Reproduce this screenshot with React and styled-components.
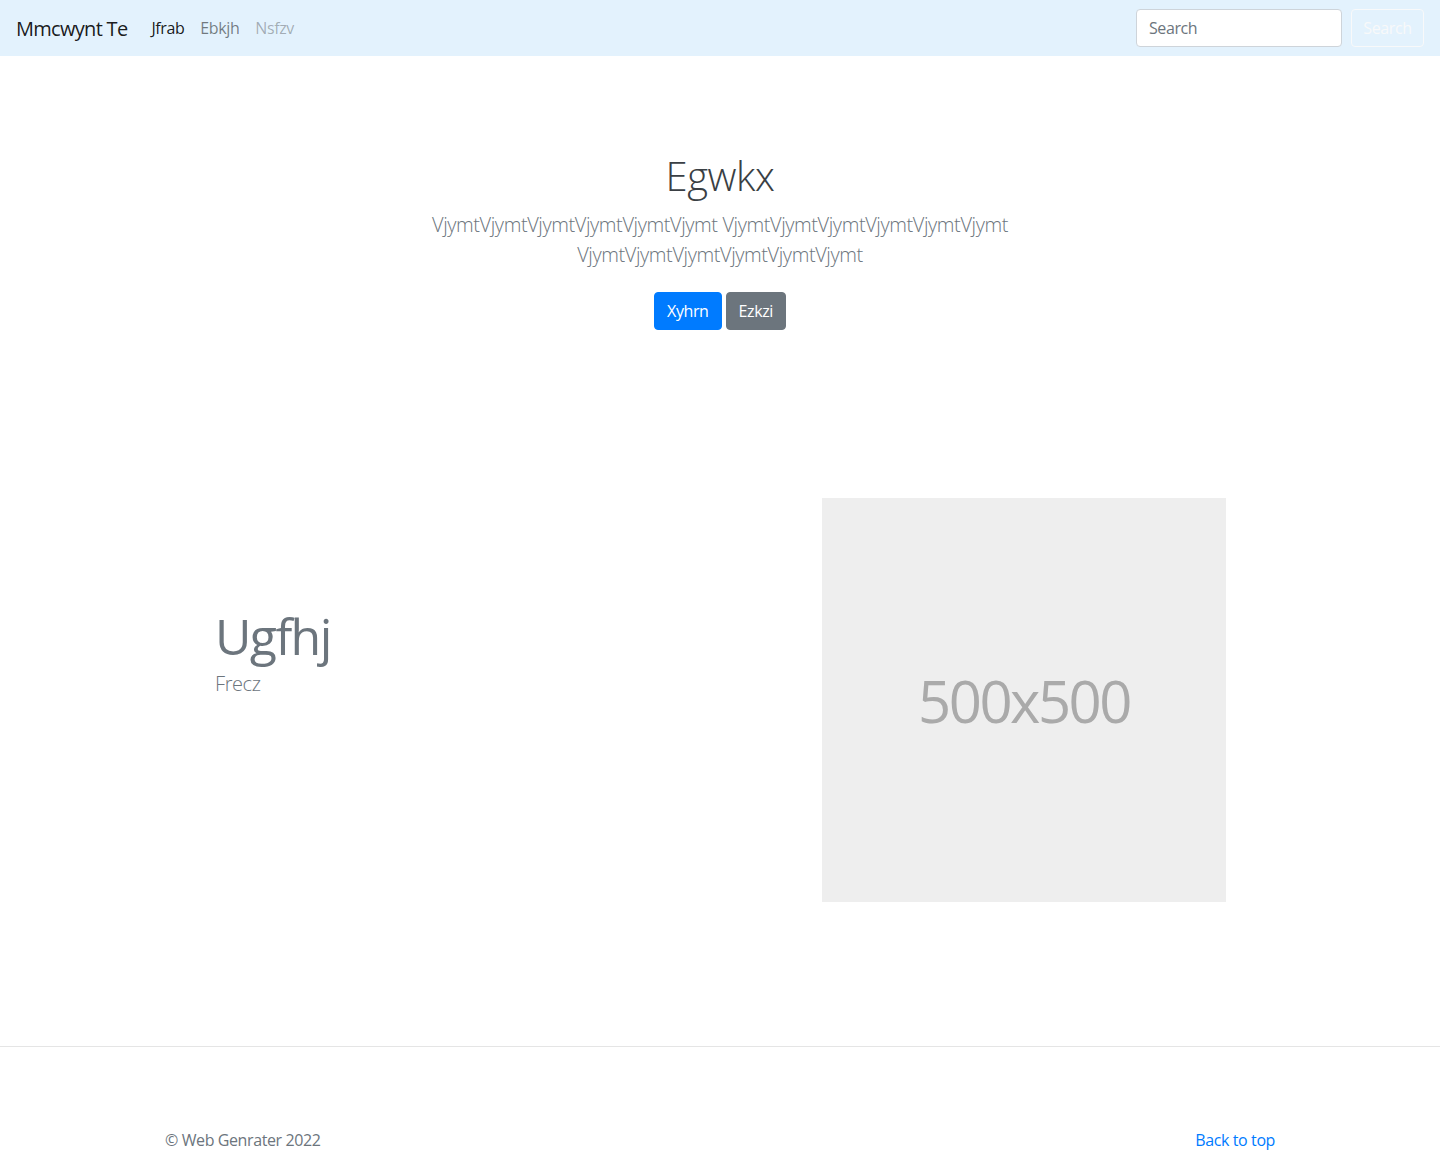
import React from 'react';
import styled, { createGlobalStyle } from 'styled-components';

const GlobalStyle = createGlobalStyle`
  * { box-sizing: border-box; }
  body {
    margin: 0;
    font-family: "Open Sans", "Noto Sans", "Liberation Sans", sans-serif;
    font-size: 16px;
    line-height: 1.5;
    letter-spacing: -0.025em;
    color: #212529;
    background: #fff;
  }
`;

const Navbar = styled.nav`
  display: flex;
  align-items: center;
  height: 56px;
  padding: 8px 16px;
  background-color: #e3f2fd;
`;

const Brand = styled.a`
  font-size: 20px;
  line-height: 30px;
  padding-top: 2px;
  letter-spacing: -0.035em;
  color: rgba(0, 0, 0, 0.9);
  margin-right: 16px;
  text-decoration: none;
`;

const NavList = styled.div`
  display: flex;
  flex: 1;
`;

const NavLink = styled.a`
  padding: 8px;
  font-size: 16px;
  text-decoration: none;
  color: ${(p) =>
    p.$active ? 'rgba(0,0,0,.9)' : p.$disabled ? 'rgba(0,0,0,.3)' : 'rgba(0,0,0,.5)'};
`;

const SearchForm = styled.form`
  display: flex;
  align-items: center;
  gap: 9px;
`;

const SearchInput = styled.input`
  width: 206px;
  height: 38px;
  padding: 6px 12px;
  font-family: inherit;
  font-size: 16px;
  letter-spacing: -0.025em;
  color: #495057;
  background: #fff;
  border: 1px solid #ced4da;
  border-radius: 4px;
  &::placeholder { color: #6c757d; }
`;

const OutlineButton = styled.button`
  width: 73px;
  height: 38px;
  font-family: inherit;
  font-size: 16px;
  letter-spacing: -0.025em;
  color: #f8f9fa;
  background: transparent;
  border: 1px solid #f8f9fa;
  border-radius: 4px;
`;

const Hero = styled.section`
  padding: 96px 0 48px;
  text-align: center;
`;

const HeroInner = styled.div`
  max-width: 640px;
  margin: 0 auto;
`;

const HeroTitle = styled.h1`
  margin: 0 0 10px;
  font-size: 40px;
  font-weight: 300;
  line-height: 1.2;
  color: #3a3f44;
`;

const Lead = styled.p`
  margin: 0 0 22px;
  font-size: 20px;
  font-weight: 300;
  line-height: 30px;
  color: #6c757d;
`;

const ButtonRow = styled.div`
  display: flex;
  justify-content: center;
  gap: 4px;
`;

const Button = styled.a`
  display: inline-block;
  padding: 6px 12px;
  font-size: 16px;
  line-height: 24px;
  color: #fff;
  background-color: ${(p) => (p.$variant === 'secondary' ? '#6c757d' : '#007bff')};
  border: 1px solid ${(p) => (p.$variant === 'secondary' ? '#6c757d' : '#007bff')};
  border-radius: 4px;
  text-decoration: none;
`;

const Feature = styled.section`
  max-width: 1110px;
  margin: 120px auto 0;
  padding: 0 49px 0 50px;
  display: grid;
  grid-template-columns: 1fr 404px;
`;

const FeatureText = styled.div`
  padding-top: 113px;
`;

const FeatureHeading = styled.h2`
  margin: 0 0 8px;
  font-size: 50px;
  font-weight: 400;
  line-height: 1;
  letter-spacing: -1.6px;
  color: #6c757d;
`;

const FeatureLead = styled.p`
  margin: 0;
  font-size: 20px;
  font-weight: 300;
  line-height: 30px;
  color: #6c757d;
`;

const Placeholder = styled.div`
  width: 404px;
  height: 404px;
  display: flex;
  align-items: center;
  justify-content: center;
  background-color: #eee;
  color: #aaa;
  font-size: 58px;
  letter-spacing: -2.5px;
`;

const Footer = styled.footer`
  margin-top: 144px;
  border-top: 1px solid #e5e5e5;
  padding: 81px 0 48px;
`;

const FooterInner = styled.div`
  max-width: 1110px;
  margin: 0 auto;
  display: flex;
  justify-content: space-between;
  color: #6c757d;
`;

const FooterLink = styled.a`
  color: #007bff;
  text-decoration: none;
`;

export default function App() {
  return (
    <>
      <GlobalStyle />
      <Navbar>
        <Brand href="#">Mmcwynt Te</Brand>
        <NavList>
          <NavLink href="#" $active>Jfrab</NavLink>
          <NavLink href="#">Ebkjh</NavLink>
          <NavLink $disabled>Nsfzv</NavLink>
        </NavList>
        <SearchForm onSubmit={(e) => e.preventDefault()}>
          <SearchInput type="search" placeholder="Search" />
          <OutlineButton type="submit">Search</OutlineButton>
        </SearchForm>
      </Navbar>

      <Hero>
        <HeroInner>
          <HeroTitle>Egwkx</HeroTitle>
          <Lead>
            VjymtVjymtVjymtVjymtVjymtVjymt VjymtVjymtVjymtVjymtVjymtVjymt
            VjymtVjymtVjymtVjymtVjymtVjymt
          </Lead>
          <ButtonRow>
            <Button href="#">Xyhrn</Button>
            <Button href="#" $variant="secondary">Ezkzi</Button>
          </ButtonRow>
        </HeroInner>
      </Hero>

      <Feature>
        <FeatureText>
          <FeatureHeading>Ugfhj</FeatureHeading>
          <FeatureLead>Frecz</FeatureLead>
        </FeatureText>
        <Placeholder>500x500</Placeholder>
      </Feature>

      <Footer>
        <FooterInner>
          <span>© Web Genrater 2022</span>
          <FooterLink href="#">Back to top</FooterLink>
        </FooterInner>
      </Footer>
    </>
  );
}
